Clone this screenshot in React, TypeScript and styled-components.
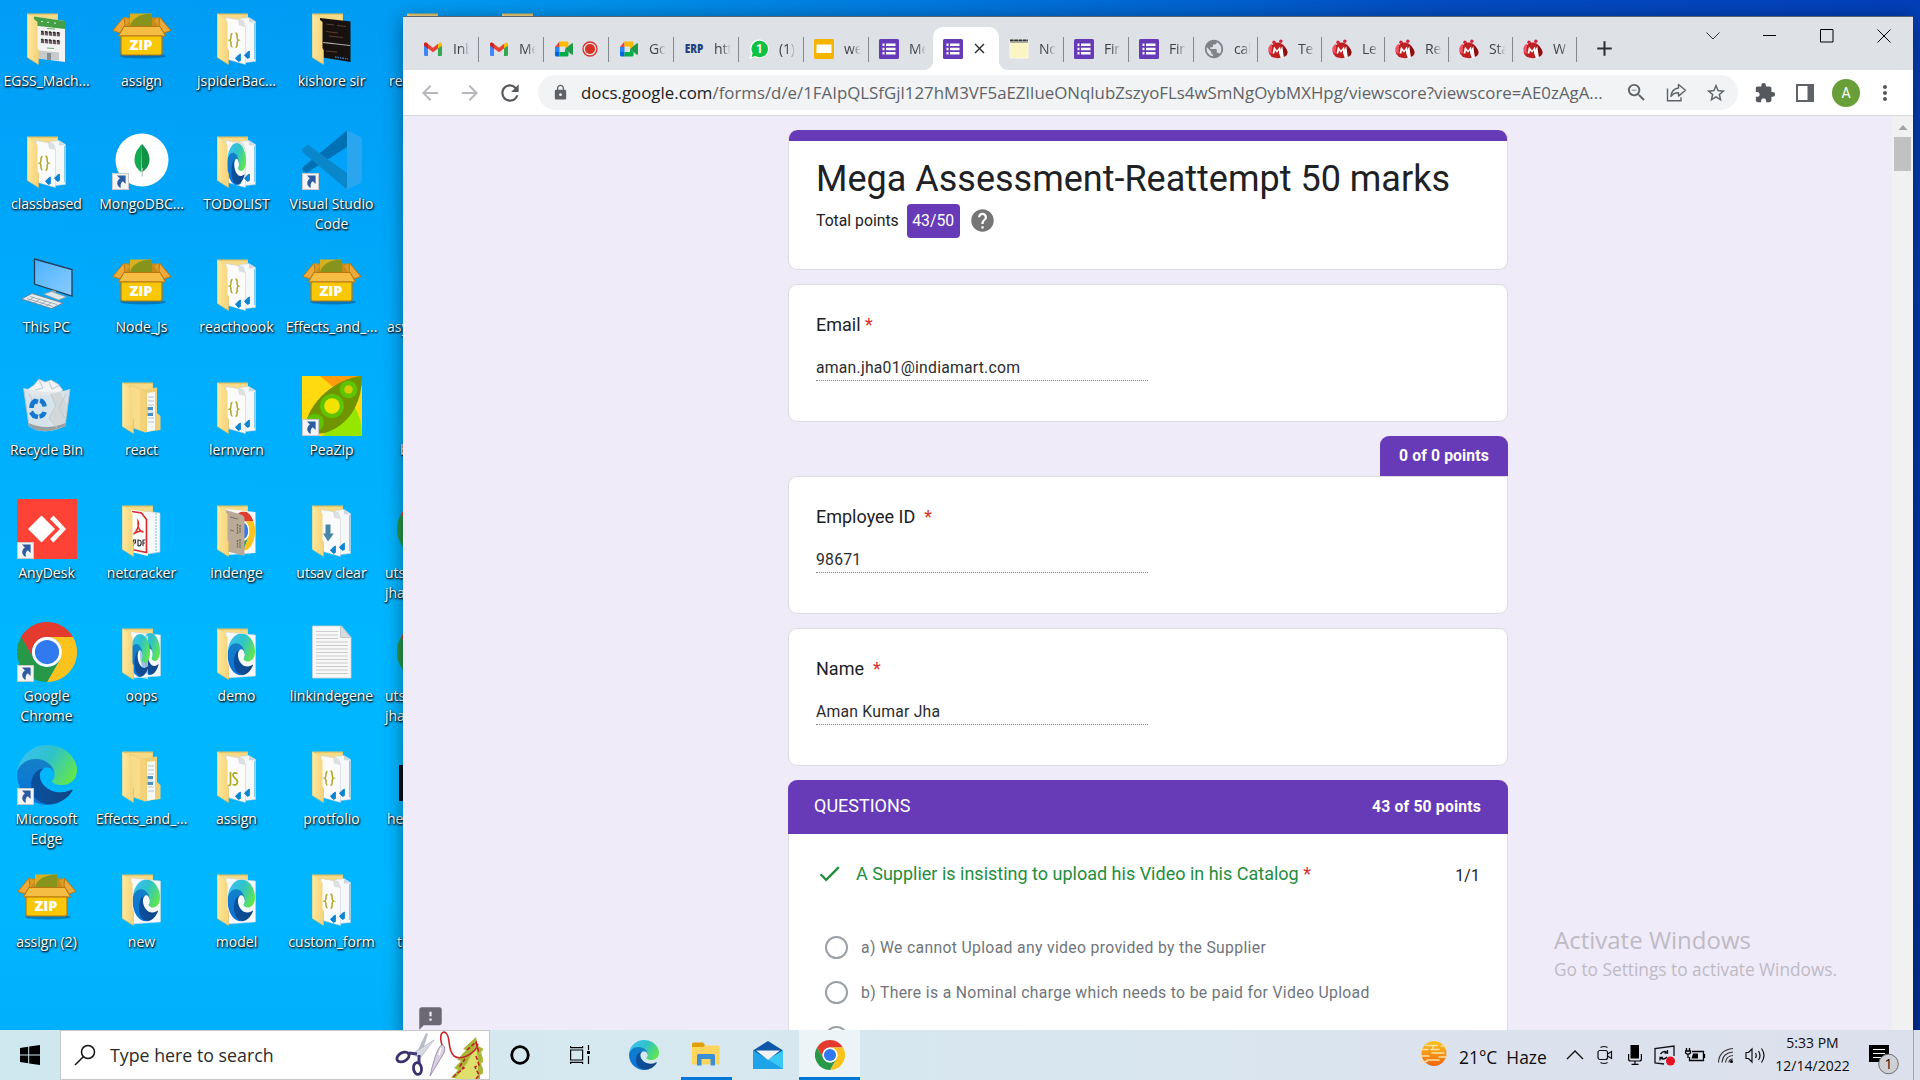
import React from "react";
import styled, { createGlobalStyle, css } from "styled-components";
import {
  MdArrowBack,
  MdArrowForward,
  MdRefresh,
  MdLock,
  MdExtension,
  MdStarBorder,
  MdMoreVert,
  MdAdd,
  MdClose,
  MdHelp,
  MdFeedback,
  MdCheck,
  MdPublic,
  MdZoomOut,
} from "react-icons/md";

const ui = `"Open Sans", "Noto Sans", sans-serif`;
const roboto = `Roboto, "Liberation Sans", sans-serif`;
const purple = "#673ab7";

const Global = createGlobalStyle`
  * { box-sizing: border-box; }
  html, body { margin: 0; padding: 0; overflow: hidden; }
  svg { display: block; flex: none; }
`;

/* ---------- desktop ---------- */

const Screen = styled.div`
  width: 1920px;
  height: 1080px;
  display: flex;
  flex-direction: column;
  overflow: hidden;
  font-family: ${ui};
`;

const Desktop = styled.div`
  position: relative;
  height: 1030px;
  overflow: hidden;
  background:
    linear-gradient(180deg, rgba(0, 183, 255, 0) 0, rgba(0, 177, 255, 0.8) 360px, #00b6ff 640px, #00b7ff 900px, #00b0fa 1030px) 0 0 / 403px 100% no-repeat,
    linear-gradient(180deg, rgba(0, 46, 150, 0), #00309a) 100% 0 / 8px 100% no-repeat,
    linear-gradient(90deg, #009df6 0, #009bf3 430px, #008de8 660px, #0078de 940px, #0160d0 1230px, #034cc2 1440px, #033fb8 1920px);
`;

const IconGrid = styled.div`
  display: grid;
  grid-auto-flow: column;
  grid-template-rows: repeat(8, 123px);
  grid-auto-columns: 95px;
  width: 600px;
  margin-left: -1px;
`;

const Cell = styled.div<{ $shift?: number }>`
  display: flex;
  flex-direction: column;
  align-items: center;
  padding-top: 7px;
  ${(p) =>
    p.$shift !== undefined &&
    css`
      align-items: flex-start;
      > svg { margin-left: 18px; }
      > span { margin-left: ${p.$shift}px; text-align: left; }
    `}
`;

const Label = styled.span`
  margin-top: 4px;
  font-size: 14px;
  line-height: 20px;
  color: #fff;
  text-align: center;
  white-space: pre;
  text-shadow: 1px 1px 2px #000, 0 1px 2px rgba(0, 0, 0, 0.75);
`;

type MarkProps = { x?: number; y?: number; size?: number; w?: number };

const EdgeMark = ({ x = 0, y = 0, size = 60, w = size }: MarkProps) => (
  <svg x={x} y={y} width={w} height={size} viewBox="0 0 256 256" preserveAspectRatio="none">
    <defs>
      <linearGradient id="edgeDark" x1="0.1" x2="0.95" y1="0.6" y2="0.6">
        <stop offset="0" stopColor="#0a4f9c" />
        <stop offset="1" stopColor="#124685" />
      </linearGradient>
      <linearGradient id="edgeBlue" x1="0.6" x2="0.4" y1="0.1" y2="1">
        <stop offset="0" stopColor="#1380c8" />
        <stop offset="1" stopColor="#0a73da" />
      </linearGradient>
      <linearGradient id="edgeTop" x1="0" x2="1" y1="0.2" y2="0.65">
        <stop offset="0" stopColor="#3cc0f6" />
        <stop offset="0.5" stopColor="#2fc3c8" />
        <stop offset="1" stopColor="#62e64e" />
      </linearGradient>
    </defs>
    <path fill="url(#edgeBlue)" d="M105.73 241.42a79.2 79.2 0 0 1-22.74-21.34 80.72 80.72 0 0 1 29.49-120c3.12-1.47 8.46-4.13 15.56-4a32.35 32.35 0 0 1 25.69 13 31.88 31.88 0 0 1 6.36 18.66c0-.21 24.46-79.6-80-79.6-43.9 0-80 41.65-80 78.21a130.15 130.15 0 0 0 12.11 56 128 128 0 0 0 156.38 67.11 75.55 75.55 0 0 1-62.78-8z" />
    <path fill="url(#edgeDark)" d="M231.05 190.54c-3.38 1.77-6.87 3.35-10.44 4.72a101.16 101.16 0 0 1-35.6 6.45c-46.91 0-87.78-32.27-87.78-73.68a31.21 31.21 0 0 1 16.27-27.23c-42.43 1.78-53.35 46-53.35 71.91 0 73.26 67.52 80.68 82.06 80.68 7.85 0 19.67-2.28 26.77-4.52l1.3-.44a128.34 128.34 0 0 0 66.6-52.8 4 4 0 0 0-5.83-5.09z" />
    <path fill="url(#edgeTop)" d="M152.33 148.86c-.81 1-3.3 2.5-3.3 5.66 0 2.61 1.7 5.12 4.72 7.23 14.38 10 41.49 8.68 41.56 8.68a59.56 59.56 0 0 0 30.27-8.35A61.38 61.38 0 0 0 256 109.18c.26-22.41-8-37.31-11.34-43.91C223.46 23.82 177.72 0 128 0A128 128 0 0 0 0 126.2c.48-36.54 36.8-66.05 80-66.05 3.5 0 23.46.34 42 10.07 16.34 8.58 24.9 18.94 30.85 29.21 6.18 10.67 7.28 24.15 7.28 29.52s-2.74 13.33-7.8 19.91z" />
  </svg>
);

const ChromeMark = ({ x = 0, y = 0, size = 60, w = size }: MarkProps) => (
  <svg x={x} y={y} width={w} height={size} viewBox="0 0 48 48" preserveAspectRatio="none">
    <path fill="#e33b2e" d="M24 12h20.785A24 24 0 0 0 3.215 12l10.393 18A12 12 0 0 1 24 12z" />
    <path fill="#fcc31e" d="M34.392 30 24 48a24 24 0 0 0 20.785-36H24a12 12 0 0 1 10.392 18z" />
    <path fill="#279847" d="M13.608 30 3.215 12A24 24 0 0 0 24 48l10.392-18a12 12 0 0 1-20.784 0z" />
    <circle cx="24" cy="24" r="12" fill="#fff" />
    <circle cx="24" cy="24" r="9.7" fill="#3079ee" />
  </svg>
);

const Shortcut = () => (
  <g>
    <rect x="0.5" y="43.5" width="16" height="16" fill="#f4f4f4" stroke="#c9c9c9" />
    <path d="M5 45.5h8.6v8.6l-2.8-2.8c-2.2 1.6-2.6 3.9-1.9 6.5-4.6-1.6-4.7-7.1-1-9.4z" fill="#2d5ba3" />
  </g>
);

type FolderKind = "code" | "green" | "dark" | "edgecode" | "edge" | "edge2" | "nested" | "pdf" | "chrome" | "down" | "js" | "plain";

const VsDot = ({ x, y }: { x: number; y: number }) => (
  <path d={`M${x + 5} ${y}v6.5l-2 1-3-3 3-3.4zM${x} ${y + 3.2}l3.4 2.4`} fill="#0a84d0" stroke="#0a84d0" strokeWidth="0.8" />
);

const Folder = ({ kind }: { kind: FolderKind }) => (
  <svg width="60" height="60" viewBox="0 0 60 60">
    <defs>
      <linearGradient id="flap" x1="0" x2="1" y1="0" y2="0.2">
        <stop offset="0" stopColor="#ffe99f" />
        <stop offset="1" stopColor="#f6d57d" />
      </linearGradient>
    </defs>
    <path d="M10.5 6.5H41V50H10.5z" fill="#e7c468" />
    <path d="M11.5 8H40.5V50H11.5z" fill="#f5da88" />
    {(kind === "code" || kind === "down" || kind === "js" || kind === "edgecode") && (
      <>
        <path d="M33 11.5l9-1 6.500 4V54.500L34 56z" fill="#f5f7f8" stroke="#c6cfd4" strokeWidth="0.5" />
        <path d="M42 10.5v4.8h6z" fill="#cdd8de" />
        <path d="M47.5 16v36" stroke="#6cc3e8" strokeWidth="0.8" />
        <path d="M19 10.5l17 3 2.5 6.5V57.5L19 52z" fill="#fbfbfb" stroke="#c4c8ca" strokeWidth="0.5" />
        <path d="M31 12.5l5.5 1.3 2 6.2-6.5-1.5z" fill="#dadfe2" />
        {kind === "code" && (
          <path d="M25.5 26.5c-2 0-1.4 3-1.6 4.7-.1 1.5-1.4 2-1.4 2s1.3.4 1.4 2c.2 1.8-.4 4.800 1.6 4.800M28.500 26c2.300.2 1.500 3.600 1.700 5.200.1 1.500 1.400 2 1.400 2s-1.300.4-1.400 2c-.2 1.800.6 5-1.700 5.200" fill="none" stroke="#a8a51c" strokeWidth="1.4" />
        )}
        {kind === "down" && <path d="M23.5 25.5h5v9h3.3L26 42.5l-5-8h2.5z" fill="#4587a8" />}
        {kind === "js" && <path d="M23.5 27v11q0 3-3 2.5M30.5 28.5q-4.500-1.500-4.500 1.500c0 3.500 4.500 3 4.500 7q-.5 4-5 2.500" fill="none" stroke="#b0ad20" strokeWidth="1.8" />}
        <VsDot x={28.5} y={47} />
        <VsDot x={37.5} y={44} />
        {kind === "edgecode" && <EdgeMark x={20} y={13} size={42} w={19} />}
      </>
    )}
    {kind === "green" && (
      <>
        <path d="M17 9.5l31 4.500v41L17 51z" fill="#f3f3f3" />
        <path d="M17 9.5l31 4.500v8L17 18.500z" fill="#43a047" />
        <path d="M24 14.5h2m4 .8h2m5 .8h2" stroke="#d8f0d8" strokeWidth="1" />
        <path d="M24 26l19 1.500M24 34l19 1.500" stroke="#6a5a5e" strokeWidth="4" strokeDasharray="3.2 .8" />
        <path d="M24 24.500l19 1.500M24 32.500l19 1.500" stroke="#2f2b2e" strokeWidth="1.6" strokeDasharray="2 2" />
        <path d="M30 21.500l8 .5M30 41l7 .5" stroke="#64b368" strokeWidth="1" />
        <path d="M22 43.5l20 2v8l-20-2z" fill="#c6cacc" />
        <path d="M30 46h4v7h-4z" fill="#858c90" />
      </>
    )}
    {kind === "dark" && (
      <>
        <path d="M18 11l30.500 3.500V55L18 50z" fill="#17120f" />
        <path d="M24 17l8 1m3 .5l9 1m-20 5l12 1.500m-9 3l14 1.500m-17 5l8 1M24 44l11 1" stroke="#63432c" strokeWidth="0.9" />
        <path d="M21 35.5l27 3" stroke="#d9d9d9" strokeWidth="0.8" />
        <path d="M33 50l13 2" stroke="#3a78b8" strokeWidth="1.6" strokeDasharray="1.5 1" />
      </>
    )}
    {(kind === "edge" || kind === "edge2") && (
      <>
        <path d="M19 10l29.500 3v41L20 56z" fill="#f7f8f9" stroke="#cfd4d6" strokeWidth="0.5" />
        {kind === "edge" ? (
          <EdgeMark x={20.5} y={11.500} size={42} w={27.500} />
        ) : (
          <>
            <EdgeMark x={28} y={11} size={42} w={20} />
            <path d="M20 10l16 4v43.500L20 53z" fill="#fafafa" fillOpacity="0.6" />
            <EdgeMark x={18} y={12} size={43} w={20} />
          </>
        )}
      </>
    )}
    {kind === "nested" && (
      <>
        <path d="M27 14l18-2.500V37l3.500 3V54L34 56z" fill="#efce74" />
        <path d="M35 17l8-1v38l-8 2z" fill="#f6f8fa" />
        <path d="M36 21h6m-6 4h6m-6 4h6m-6 8h6m-6 5h6m-6 4h6" stroke="#a6b6c4" strokeWidth="0.8" />
        <path d="M35.5 31h5.500v9h-5.500z" fill="#4a90c4" />
        <path d="M35.5 34h5.500v3h-5.500z" fill="#d8e8f4" />
        <path d="M18 9l16 6.500V56.500L18 51z" fill="#f8dc8c" stroke="#e6c263" strokeWidth="0.5" />
        <path d="M28 14l6 2v40l-6-2z" fill="#f3d27a" />
      </>
    )}
    {kind === "pdf" && (
      <>
        <path d="M33 12l15 2V53L36 55z" fill="#f6f8f9" stroke="#c3cbd0" strokeWidth="0.6" />
        <path d="M44 14v38" stroke="#6cc3ea" strokeDasharray="2 1" />
        <path d="M19 10.5l17 3V57L19 53z" fill="#fff" />
        <path d="M20 12.5l9.500 1.500 5 6.500v33L20 50.500" fill="none" stroke="#dc2b2b" strokeWidth="1.7" />
        <path d="M26 22c2 4-2 12-4.500 13 4-3 7-3.500 10-2-4-.5-6-5-5.500-11z" fill="none" stroke="#e02f2f" strokeWidth="1.5" />
        <path d="M21.5 47v-6h2v3h-2m4.500 3v-6q4 0 3 4 0 2-3 2m5 0v-6h2.500m-2.500 3h2" fill="none" stroke="#333" strokeWidth="1.2" />
      </>
    )}
    {kind === "chrome" && (
      <>
        <path d="M19 10l29.500 3v41L20 56z" fill="#f7f8f9" />
        <ChromeMark x={25} y={12.500} size={39} w={23} />
        <path d="M19 11l15 4.500q3.500 1.500 3.500 4V57L19 52z" fill="#b9ab97" />
        <path d="M23 18l8 2m-8 11l4 1" stroke="#685e50" strokeWidth="0.8" />
        <path d="M30.5 25v10m2.500-9v8M30.500 41v8m2.500-9v9" stroke="#776c5f" strokeWidth="1.4" strokeDasharray="2 .7" />
      </>
    )}
    <path d="M10.3 6.500L20.500 15V41l1 2V57.500L10.300 50.500z" fill="url(#flap)" />
    <path d="M10.3 50.500L21.500 57.500V43" fill="none" stroke="#dfbb5c" strokeWidth="0.6" />
  </svg>
);

const ZipText = styled.text`
  font: 800 14px "Open Sans", sans-serif;
  fill: #fff;
`;

const ZipBox = () => (
  <svg width="60" height="60" viewBox="0 0 60 60">
    <ellipse cx="31" cy="49" rx="23" ry="2.5" fill="rgba(0,60,110,.45)" />
    <path d="M12 10.5h36V21H12z" fill="#c98a1a" />
    <path d="M18 6.5h22v14H18z" fill="#d8b01e" />
    <path d="M18 19C20 11 28 7 40 6.500V20H18z" fill="#86941c" />
    <path d="M12 10L8 19h6l4-6zM48 10l4 9h-6l-4-6z" fill="#dc9c28" />
    <path d="M12 10L0.8 23.500 8 26l5-8zM47.500 10L58.800 23.500 52 26l-5-8z" fill="#eda93a" stroke="#b97710" strokeWidth="1" />
    <path d="M12 19.5h36l5.500 9.500H6.500z" fill="#f6bd45" stroke="#b97710" strokeWidth="1" />
    <path d="M9 29h41v17q0 2-2 2H11q-2 0-2-2z" fill="#f8c806" stroke="#b97710" strokeWidth="1.2" />
    <ZipText x="17.4" y="43.400" textLength="23" lengthAdjust="spacingAndGlyphs">ZIP</ZipText>
  </svg>
);

const Mongo = () => (
  <svg width="60" height="60" viewBox="0 0 60 60">
    <circle cx="30" cy="30" r="26.5" fill="#fff" />
    <path d="M30 14c-4.500 5-7.500 9-7.500 16 0 6 3.500 9.500 7 12.500z" fill="#13aa52" />
    <path d="M30 14c4.500 5 7.500 9 7.500 16 0 6-4 9.500-7.500 12.500z" fill="#129149" />
    <path d="M30.2 38v8.500" stroke="#b8c4c2" strokeWidth="1.2" />
    <Shortcut />
  </svg>
);

const VsCode = () => (
  <svg width="60" height="60" viewBox="0 0 60 60">
    <path d="M45 0.5V17L4.500 43 .8 40.500q-1.300-1.800 0-3.200z" fill="#0070b4" />
    <path d="M45 59.5V43L5.500 14.500.8 19q-1.300 1.500 0 3.200z" fill="#0a86cb" />
    <path d="M45 .5l13 6q2 1 2 3.300V50q0 2.500-2 3.400l-13 6q-2 .6-3.500-1c2 1.500 3.500.3 3.500-1.400z" fill="#2aa5f0" />
    <Shortcut />
  </svg>
);

const ThisPc = () => (
  <svg width="60" height="60" viewBox="0 0 60 60">
    <defs>
      <linearGradient id="pc" x1="0" x2="1" y1="0" y2="1">
        <stop offset="0" stopColor="#4db2ff" />
        <stop offset="1" stopColor="#8acdff" />
      </linearGradient>
    </defs>
    <path d="M17.5 6L55 16.500V43L17.500 31z" fill="url(#pc)" stroke="#23405a" strokeWidth="1.3" />
    <path d="M35 37l4 1v4h-4z" fill="#9aa7b0" />
    <path d="M26.5 41l8-2.500 15 5.500-8 3z" fill="#dfe6ea" stroke="#8b98a1" strokeWidth="0.7" />
    <path d="M4.5 46L15 40.500 46 50 34.500 55.500z" fill="#e4eaee" stroke="#6f7c86" strokeWidth="0.8" />
    <path d="M10 45.5l26 8M13 43.500l27 8M11 48l6-4m0 6l6-4m0 6l6-4m-1 6l6-4" stroke="#8b98a1" strokeWidth="0.7" />
  </svg>
);

const RecycleBin = () => (
  <svg width="60" height="60" viewBox="0 0 60 60">
    <path d="M10 14l7-5 5-6 6 3 6-2 7 4 5 6-6 5H15z" fill="#f1f3f4" stroke="#b7bfc4" strokeWidth="0.7" />
    <path d="M22 4l4 8-8 2m14-8l3 7 8-4" fill="none" stroke="#b9c1c6" strokeWidth="0.9" />
    <path d="M6.5 12l5.500 38q14 10 36 0l5-37q-20 7-46.500-1z" fill="#e3e7e9" fillOpacity="0.94" />
    <path d="M33 18l6 12-7 12 8 10 7-4 3-20-7-12z" fill="#d2d7da" />
    <path d="M6.5 12l5.500 38q14 10 36 0l5-37" fill="none" stroke="#b4c2cb" strokeWidth="1" />
    <path d="M12 50q14 10 36 0l.5-3q-19 8-37 0z" fill="#979fa3" />
    <path d="M34 18l5 12-7 12 8 10m9-34l-7 14 6 10M12 18l4 8" stroke="#c2c9cd" strokeWidth="1" fill="none" />
    <g fill="none" stroke="#1478d0" strokeWidth="4.600">
      <path d="M14.5 32q0-5 3.500-7l3 1" />
      <path d="M23 24.500q4 1 4.500 6" />
      <path d="M27.5 36q-1 4-5 4.500M14 36l3 4 4 1" />
    </g>
  </svg>
);

const PeaZip = () => (
  <svg width="60" height="60" viewBox="0 0 60 60">
    <path d="M0 0h60v60H0z" fill="#ffda10" />
    <path d="M18 0h42v10L30 10z" fill="#ff9c0c" />
    <path d="M52 30q8 12 8 30H20z" fill="#96e600" />
    <path d="M60 0C35 2 6 25 3 52q9 7 20 5C45 50 60 30 60 0z" fill="#6f9400" />
    <circle cx="46.5" cy="13.5" r="8.8" fill="#5fc400" />
    <circle cx="46.5" cy="13.5" r="4.3" fill="#d6cc00" />
    <circle cx="30" cy="30" r="12" fill="#5fc400" />
    <circle cx="30" cy="30" r="7.8" fill="#f2e400" />
    <circle cx="13" cy="46.5" r="8.8" fill="#5fc400" />
    <Shortcut />
  </svg>
);

const AnyDesk = () => (
  <svg width="60" height="60" viewBox="0 0 60 60">
    <path d="M0 0h60v60H0z" fill="#fe4236" />
    <path d="M24.5 16.500L38 30 24.500 43.500 11 30z" fill="#fff" />
    <path d="M33 20l3.500-3.500L49 30 36.500 43.500 33 40l10-10z" fill="#fff" />
    <Shortcut />
  </svg>
);

const TextFile = () => (
  <svg width="60" height="60" viewBox="0 0 60 60">
    <path d="M10.5 4h29L49 15.500V56H10.500z" fill="#f8f8f8" stroke="#cfcfcf" strokeWidth="0.8" />
    <path d="M38.5 4v11.500H49z" fill="#d9dcde" stroke="#b9bec1" strokeWidth="0.8" />
    <path d="M14 9.5h22M14 13h22M14 16.500h22M14 20h32M14 23.500h32M14 27h32M14 30.500h32M14 34h32M14 37.500h32M14 41h32M14 44.500h32M14 48h32M14 51.500h32" stroke="#cbcbcb" strokeWidth="1" />
  </svg>
);

const ChromeShortcut = () => (
  <svg width="60" height="60" viewBox="0 0 60 60">
    <ChromeMark />
    <Shortcut />
  </svg>
);
const EdgeShortcut = () => (
  <svg width="60" height="60" viewBox="0 0 60 60">
    <EdgeMark />
    <Shortcut />
  </svg>
);
const Blank = () => <svg width="60" height="60" />;
const DarkTile = () => (
  <svg width="60" height="60" viewBox="0 0 60 60">
    <path d="M2 20h58v36H2z" fill="#05131c" />
  </svg>
);

type Item = { icon: React.ReactNode; label: string; shift?: number };
const f = (kind: FolderKind, label: string): Item => ({ icon: <Folder kind={kind} />, label });

const items: Item[] = [
  f("green", "EGSS_Mach..."),
  f("code", "classbased"),
  { icon: <ThisPc />, label: "This PC" },
  { icon: <RecycleBin />, label: "Recycle Bin" },
  { icon: <AnyDesk />, label: "AnyDesk" },
  { icon: <ChromeShortcut />, label: "Google\nChrome" },
  { icon: <EdgeShortcut />, label: "Microsoft\nEdge" },
  { icon: <ZipBox />, label: "assign (2)" },

  { icon: <ZipBox />, label: "assign" },
  { icon: <Mongo />, label: "MongoDBC..." },
  { icon: <ZipBox />, label: "Node_Js" },
  f("nested", "react"),
  f("pdf", "netcracker"),
  f("edge2", "oops"),
  f("nested", "Effects_and_..."),
  f("edge", "new"),

  f("code", "jspiderBac..."),
  f("edgecode", "TODOLIST"),
  f("code", "reacthoook"),
  f("code", "lernvern"),
  f("chrome", "indenge"),
  f("edge", "demo"),
  f("js", "assign"),
  f("edge", "model"),

  f("dark", "kishore sir"),
  { icon: <VsCode />, label: "Visual Studio\nCode" },
  { icon: <ZipBox />, label: "Effects_and_..." },
  { icon: <PeaZip />, label: "PeaZip" },
  f("down", "utsav clear"),
  { icon: <TextFile />, label: "linkindegene" },
  f("code", "protfolio"),
  f("code", "custom_form"),

  { icon: <Folder kind="plain" />, label: "re", shift: 10 },
  { icon: <Blank />, label: "", shift: 0 },
  { icon: <Blank />, label: "asy", shift: 8 },
  { icon: <Blank />, label: "b", shift: 21 },
  { icon: <ChromeMark />, label: "uts\njha", shift: 6 },
  { icon: <ChromeMark />, label: "uts\njha", shift: 6 },
  { icon: <DarkTile />, label: "he", shift: 8 },
  { icon: <Blank />, label: "t", shift: 18 },

  { icon: <Folder kind="plain" />, label: "", shift: 0 },
];

/* ---------- browser ---------- */

const Window = styled.div`
  position: absolute;
  left: 403px;
  top: 16px;
  width: 1510px;
  height: 1030px;
  display: flex;
  flex-direction: column;
  border-top: 1px solid #5d6670;
  background: #fff;
  box-shadow: 0 3px 18px rgba(0, 0, 0, 0.42);
`;

const TabStrip = styled.div`
  display: flex;
  align-items: flex-end;
  height: 53px;
  padding-left: 10px;
  background: #dee1e6;
`;

const Tab = styled.div<{ $w: number; $sep?: boolean }>`
  display: flex;
  align-items: center;
  width: ${(p) => p.$w}px;
  height: 43px;
  padding-left: 10px;
  background: ${(p) =>
    p.$sep ? "linear-gradient(#85898e, #85898e) right 10px / 1.5px 25px no-repeat" : "none"};
`;

const ActiveTab = styled(Tab)`
  position: relative;
  border-radius: 10px 10px 0 0;
  background: #fff;
  gap: 8px;
  color: #2c2f33;
  &::before,
  &::after {
    content: "";
    position: absolute;
    bottom: 0;
    width: 10px;
    height: 10px;
  }
  &::before {
    left: -10px;
    background: radial-gradient(circle at 0 0, transparent 10px, #fff 10.5px);
  }
  &::after {
    right: -10px;
    background: radial-gradient(circle at 100% 0, transparent 10px, #fff 10.5px);
  }
`;

const TabTitle = styled.span`
  width: 17px;
  margin-left: 10px;
  overflow: hidden;
  white-space: nowrap;
  font-size: 14px;
  line-height: 20px;
  letter-spacing: -0.2px;
  color: #3f4246;
  mask-image: linear-gradient(90deg, #000 45%, transparent 98%);
`;

const TabRec = styled.div`
  margin-left: 8px;
`;

const NewTab = styled.div`
  display: flex;
  align-items: center;
  height: 43px;
  margin-left: 15px;
  color: #2e3135;
`;

const WindowButtons = styled.div`
  display: flex;
  align-self: flex-start;
  margin-left: auto;
  padding-right: 1px;
`;

const WinButton = styled.div`
  display: flex;
  justify-content: center;
  width: 57px;
  padding-top: 12px;
`;

const Toolbar = styled.div`
  display: flex;
  align-items: center;
  height: 46px;
  padding: 0 4px 0 13px;
  border-bottom: 1px solid #d5d7db;
  color: #5f6368;
`;

const NavIcon = styled.div<{ $dim?: boolean; $w: number }>`
  display: flex;
  flex: none;
  justify-content: center;
  width: ${(p) => p.$w}px;
  color: ${(p) => (p.$dim ? "#b5b7ba" : "#55595e")};
`;

const Omnibox = styled.div`
  display: flex;
  flex: none;
  align-items: center;
  width: 1200px;
  height: 35px;
  padding: 0 2px 0 14px;
  margin-left: 14px;
  border-radius: 18px;
  background: #f1f3f4;
`;

const Url = styled.div`
  flex: none;
  width: 1036px;
  margin-left: 12px;
  font-size: 16.85px;
  line-height: 24px;
  white-space: nowrap;
  color: #5f6368;
  b { font-weight: 400; color: #202124; }
`;

const OmniIcon = styled.div`
  display: flex;
  justify-content: center;
  width: 40px;
`;

const Avatar = styled.div`
  display: flex;
  flex: none;
  align-items: center;
  justify-content: center;
  width: 28px;
  height: 28px;
  margin: 0 5px;
  border-radius: 50%;
  background: #689f38;
  color: #fff;
  font: 400 14px ${roboto};
`;

const Viewport = styled.div`
  display: flex;
  flex: 1;
  min-height: 0;
  background: #efebf8;
`;

const PageArea = styled.div`
  position: relative;
  width: 1489px;
  height: 914px;
  overflow: hidden;
  padding: 14px 0 0 385px;
  font-family: ${roboto};
  color: #202124;
`;

const Scrollbar = styled.div`
  display: flex;
  flex-direction: column;
  align-items: center;
  width: 21px;
  background: #f1f1f1;
`;

const ScrollThumb = styled.div`
  width: 17px;
  height: 34px;
  margin-top: 7px;
  background: #c1c1c1;
`;

/* ---------- form ---------- */

const Card = styled.section<{ $h: number; $notch?: boolean }>`
  width: 720px;
  height: ${(p) => p.$h}px;
  margin-bottom: 14px;
  padding: 26px 27px 0;
  border: 1px solid #dadce0;
  border-radius: ${(p) => (p.$notch ? "9px 0 9px 9px" : "9px")};
  background: #fff;
`;

const HeaderCard = styled(Card)`
  padding-top: 27px;
  border-top: 0;
  background: linear-gradient(${purple}, ${purple}) 0 0 / 100% 11px no-repeat border-box, #fff;
`;

const Title = styled.h1`
  margin: 0 0 2px;
  font-size: 36px;
  font-weight: 400;
  line-height: 45px;
  white-space: nowrap;
`;

const ScoreRow = styled.div`
  display: flex;
  align-items: center;
  height: 34px;
  font-size: 15.75px;
  > svg { margin-bottom: 1px; }
`;

const ScoreLabel = styled.span`
  padding-bottom: 2px;
`;

const ScoreBadge = styled.span`
  display: flex;
  align-items: center;
  justify-content: center;
  width: 53px;
  height: 34px;
  margin: 0 9px 0 8px;
  padding-bottom: 2px;
  border-radius: 4px;
  background: ${purple};
  color: #fff;
`;

const FieldName = styled.div`
  font-size: 18px;
  line-height: 27px;
  white-space: pre;
`;

const Star = styled.span`
  color: #d93025;
`;

const FieldValue = styled.div`
  width: 332px;
  height: 24px;
  margin-top: 19px;
  border-bottom: 1px dotted #8b8b8b;
  font-size: 15.75px;
  line-height: 22px;
  letter-spacing: 0.22px;
  color: #2b2c2e;
`;

const PointsTab = styled.div`
  width: 128px;
  height: 40px;
  margin-left: 592px;
  border-radius: 9px 9px 0 0;
  background: ${purple};
  color: #fff;
  font-size: 15.75px;
  font-weight: 700;
  line-height: 39px;
  letter-spacing: 0.1px;
  text-align: center;
`;

const SectionHead = styled.div`
  display: flex;
  align-items: center;
  justify-content: space-between;
  width: 720px;
  height: 54px;
  padding: 0 27px 4px 26px;
  border-radius: 9px 9px 0 0;
  background: ${purple};
  color: #fff;
  font-size: 18px;
  b { font-size: 15.75px; font-weight: 700; letter-spacing: 0.16px; padding-top: 3px; }
`;

const QuestionBody = styled.div`
  width: 720px;
  height: 300px;
  padding: 26px 27px 0;
  border: solid #dadce0;
  border-width: 0 1px;
  background: #fff;
`;

const QuestionRow = styled.div`
  display: flex;
  align-items: center;
  height: 27px;
  margin-bottom: 38px;
  font-size: 18px;
  color: #1e8e3e;
`;

const QuestionText = styled.span`
  flex: 1;
  margin-left: 13px;
`;

const Points = styled.span`
  padding-top: 3px;
  font-size: 15.75px;
  letter-spacing: 0.22px;
  color: #202124;
`;

const Option = styled.div`
  display: flex;
  align-items: center;
  height: 45px;
  padding-left: 8.5px;
  font-size: 15.75px;
  letter-spacing: 0.33px;
  color: #70757a;
`;

const Radio = styled.span`
  width: 23px;
  height: 23px;
  margin-right: 13.5px;
  border: 2.25px solid #9aa0a6;
  border-radius: 50%;
`;

const Feedback = styled.div`
  position: absolute;
  left: 14px;
  bottom: -2px;
  color: #6c6975;
`;

const Watermark = styled.div`
  position: absolute;
  left: 1554px;
  top: 922px;
  color: #bebac5;
  white-space: nowrap;
`;
const WatermarkTitle = styled.div`
  font-size: 24px;
  line-height: 36px;
`;
const WatermarkText = styled.div`
  font-size: 17.3px;
  line-height: 23px;
`;

/* ---------- tab icons ---------- */

const Gmail = () => (
  <svg width="20" height="20" viewBox="0 0 20 20">
    <path d="M1 6l4 3v8H2.200Q1 17 1 15.700z" fill="#4285f4" />
    <path d="M15 9l4-3v9.700q0 1.300-1.200 1.300H15z" fill="#34a853" />
    <path d="M15 5l1.600-1.200Q19 3 19 5.500V6.500L15 9.500z" fill="#fbbc04" />
    <path d="M1 6.500v-1Q1 3 3.400 3.800L10 8.700l5-3.900v4.700l-5 3.800-5-3.800z" fill="#ea4335" />
    <path d="M1 6.500v-1Q1 3 3.400 3.800L5 5v4.500z" fill="#c5221f" />
  </svg>
);
const Meet = () => (
  <svg width="20" height="20" viewBox="0 0 20 20">
    <path d="M1 8h4.500v5H1z" fill="#2684fc" />
    <path d="M5.500 2.500V8H1z" fill="#ea4335" />
    <path d="M5.500 2.500H13q1.500 0 1.500 1.500v3L11 10V7.500H5.500z" fill="#ffba00" />
    <path d="M1 13h4.500v4.500H2.500Q1 17.500 1 16z" fill="#0066da" />
    <path d="M5.500 13H11v-3l3.500 3v3q0 1.500-1.500 1.500H5.500z" fill="#00ac47" />
    <path d="M11 10l6.500-5.600q1.500-.6 1.500.8v9.600q0 1.400-1.500.8z" fill="#1e9a48" />
  </svg>
);
const Rec = () => (
  <svg width="16" height="16" viewBox="0 0 16 16">
    <circle cx="8" cy="8" r="7" fill="none" stroke="#d93025" strokeWidth="1.3" />
    <circle cx="8" cy="8" r="5" fill="#d93025" />
  </svg>
);
const ErpText = styled.text`
  font: 800 11.5px "Open Sans", sans-serif;
  fill: #23407e;
`;
const Erp = () => (
  <svg width="20" height="20" viewBox="0 0 20 20">
    <ErpText x="0.8" y="14.2" textLength="18.5" lengthAdjust="spacingAndGlyphs">ERP</ErpText>
  </svg>
);
const BadgeText = styled.text`
  font: 700 12px Roboto, sans-serif;
  fill: #fff;
`;
const WhatsApp = () => (
  <svg width="20" height="20" viewBox="0 0 20 20">
    <path d="M10.5.5a9.300 9.300 0 1 1-4.300 17.600L.5 19.800l1.700-5.300A9.300 9.300 0 0 1 10.500.5z" fill="#fff" />
    <path d="M10.5 1.800a8.200 8.200 0 1 1-4 15.200l-4 1.100 1.200-3.800a8.200 8.200 0 0 1 6.800-12.500z" fill="#0dc143" />
    <BadgeText x="7" y="14.3">1</BadgeText>
  </svg>
);
const Slides = () => (
  <svg width="20" height="20" viewBox="0 0 20 20">
    <rect width="20" height="20" rx="1.5" fill="#f4b400" />
    <path d="M2.5 5.500h15v8.500h-15z" fill="#fff" />
  </svg>
);
const Forms = () => (
  <svg width="20" height="20" viewBox="0 0 20 20">
    <rect width="20" height="20" rx="1.5" fill={purple} />
    <path d="M3.5 4.500h2v2.500h-2zM7 4.500h9.500v2.500H7zM3.500 8.700h2v2.500h-2zM7 8.700h9.500v2.500H7zM3.500 12.900h2v2.500h-2zM7 12.900h9.500v2.500H7z" fill="#fff" />
  </svg>
);
const Note = () => (
  <svg width="20" height="20" viewBox="0 0 20 20">
    <path d="M1 1h18v18H1z" fill="#fbf5c4" stroke="#fdfae4" />
    <path d="M1 .8h18v3H1z" fill="#9b9b98" />
    <path d="M1 1.200h18" stroke="#333" strokeWidth="1.5" strokeDasharray="3.5 .8" />
  </svg>
);
const IndiaMart = () => (
  <svg width="20" height="20" viewBox="0 0 20 20">
    <circle cx="6" cy="3.2" r="1.7" fill="#d5203a" />
    <circle cx="12.8" cy="2.200" r="1.7" fill="#d5203a" />
    <path d="M9.500 3.500q4.500 0 7.500 4.500 5 6-.5 9.500-6 3-12.500.5-5.500-4-2-9 3-5.500 7.500-5.500z" fill="#c01f22" />
    <path d="M.3 9.500q1-4 3.700-4.500L3.500 15Q0 13 .3 9.500z" fill="#ef5363" />
    <path d="M13 5.500q5 2 6.500 7.500.3 3-3 4.700z" fill="#8e0f12" />
    <path d="M4.500 14.500L6 7.500l3 4L12 7.500l1.300 7-2-.2-.6-3L9 13.800 7 11.400l-.7 3.200z" fill="#fff" />
    <path d="M11 13.500l3.300-6.500 1.500 11.500-3 .8z" fill="#fff" />
  </svg>
);

const Share = () => (
  <svg width="21" height="19" viewBox="0 0 21 19" fill="none" stroke="#5f6368" strokeWidth="1.4">
    <path d="M1.5 5.500v12.200h13.500v-3.500" />
    <path d="M12.5 1.500l7 5.800-7 5.800V9.700Q7.500 9.500 5 13.500q.5-7.500 7.500-8.500z" strokeLinejoin="round" />
  </svg>
);

/* ---------- taskbar ---------- */

const Taskbar = styled.div`
  display: flex;
  height: 50px;
  background: linear-gradient(90deg, #cfe7ef 0, #d6e8f0 600px, #d8e6ef 1100px, #dbe2ee 1500px, #dce0ed 1920px);
  color: #0c0c0c;
`;

const TaskButton = styled.div<{ $w: number; $active?: boolean; $line?: number }>`
  display: flex;
  align-items: center;
  justify-content: center;
  width: ${(p) => p.$w}px;
  background: ${(p) =>
    `linear-gradient(#0078d7, #0078d7) center bottom / ${p.$line ?? 0}px 3px no-repeat, ${p.$active ? "#ecf4f8" : "transparent"}`};
`;

const SearchBox = styled.div`
  display: flex;
  align-items: center;
  width: 430px;
  padding: 0 6px 0 13px;
  border: 1px solid #c6c8ca;
  background: #fff;
  font-size: 17.8px;
  color: #2b2b2b;
  > span { margin-left: 14px; flex: 1; }
`;

const Gap = styled.div`
  width: 3px;
`;

const Tray = styled.div`
  display: flex;
  align-items: center;
  width: 502px;
  margin-left: auto;
`;

const Weather = styled.div`
  display: flex;
  align-items: center;
  width: 142px;
  font-size: 17.4px;
  white-space: pre;
  > svg { margin-bottom: 2px; }
  > span { margin-left: 10px; padding-top: 4px; }
`;

const TrayIcon = styled.div`
  display: flex;
  justify-content: center;
  width: 30px;
`;

const Clock = styled.div`
  width: 85px;
  font-size: 14px;
  line-height: 23px;
  text-align: center;
  white-space: nowrap;
  padding-bottom: 2px;
`;

const Notify = styled.div`
  width: 59px;
  height: 50px;
  padding: 14px 0 0 14px;
  border-right: 1px solid #9aa6b0;
`;

const NotifyText = styled.text`
  font: 400 14px "Open Sans", sans-serif;
  fill: #111;
`;

const Scissors = () => (
  <svg width="88" height="48" viewBox="0 0 88 48">
    <path d="M56 47L63 39 59 37l7-7-4-1 9-10-3-1L81 6l2 9 6 3-3 3 3 10-3 1 3 10-4 2v4z" fill="#a9b637" />
    <path d="M60 48l12-16 9-18 2 15v19z" fill="#dfe06c" />
    <path d="M58 46l11-9-4-2 5-7m2-9l9-8 3 11m-3 3l3 9-4 2 4 8-3 4" fill="none" stroke="#c41f24" strokeWidth="1.6" strokeDasharray="4 2" />
    <path d="M47 14C44 4 47-1 51 2c5 4 1 17 8 23 7 5 21-2 24-12" fill="none" stroke="#c8232a" strokeWidth="1.6" />
    <path d="M48 14q3 2 1 8L35 45q5-22 9-28 1-3 4-3z" fill="#d9cfe0" stroke="#9d8cac" strokeWidth="0.9" />
    <path d="M46 17l-2 7" stroke="#fff" strokeWidth="1.6" />
    <path d="M31 2l-9 19 4 4L33 3z" fill="#b8bcc8" />
    <path d="M39 9L20 21v4l6 1z" fill="#d7dae1" stroke="#a5a9b5" strokeWidth="0.6" />
    <path d="M22 23l-8-1M24 24v9" stroke="#433a7d" strokeWidth="3" />
    <ellipse cx="8" cy="26" rx="6.5" ry="4.3" transform="rotate(-30 8 26)" fill="none" stroke="#3a3170" strokeWidth="2.8" />
    <ellipse cx="22.5" cy="37.5" rx="4" ry="6" transform="rotate(-8 22.5 37.5)" fill="none" stroke="#3a3170" strokeWidth="2.8" />
  </svg>
);

const GlobeIcon = styled(MdPublic)`
  margin: 0 -1px;
  color: #808388;
`;

type TabDef = { icon: React.ReactNode; title?: string; w: number; sep?: boolean; rec?: boolean };
const leftTabs: TabDef[] = [
  { icon: <Gmail />, title: "Inb", w: 66, sep: true },
  { icon: <Gmail />, title: "Me", w: 65, sep: true },
  { icon: <Meet />, w: 65, sep: true, rec: true },
  { icon: <Meet />, title: "Goo", w: 65, sep: true },
  { icon: <Erp />, title: "http", w: 65, sep: true },
  { icon: <WhatsApp />, title: "(1)", w: 65, sep: true },
  { icon: <Slides />, title: "wee", w: 65, sep: true },
  { icon: <Forms />, title: "Me", w: 64 },
];
const rightTabs: TabDef[] = [
  { icon: <Note />, title: "Not", w: 65, sep: true },
  { icon: <Forms />, title: "Fin", w: 65, sep: true },
  { icon: <Forms />, title: "Fin", w: 65, sep: true },
  { icon: <GlobeIcon size={22} />, title: "cal", w: 64, sep: true },
  { icon: <IndiaMart />, title: "Te", w: 64, sep: true },
  { icon: <IndiaMart />, title: "Le", w: 63, sep: true },
  { icon: <IndiaMart />, title: "Re", w: 64, sep: true },
  { icon: <IndiaMart />, title: "Sta", w: 64, sep: true },
  { icon: <IndiaMart />, title: "W", w: 64, sep: true },
];

const renderTab = (t: TabDef, i: number) => (
  <Tab key={i} $w={t.w} $sep={t.sep}>
    {t.icon}
    {t.rec ? <TabRec><Rec /></TabRec> : <TabTitle>{t.title}</TabTitle>}
  </Tab>
);

const Browser = () => (
  <Window>
    <TabStrip>
      {leftTabs.map(renderTab)}
      <ActiveTab $w={66}>
        <Forms />
        <MdClose size={17} />
      </ActiveTab>
      {rightTabs.map(renderTab)}
      <NewTab>
        <MdAdd size={25} />
      </NewTab>
      <WindowButtons>
        <WinButton>
          <svg width="14" height="14" viewBox="0 0 14 14"><path d="M.5 3.500L7 10l6.500-6.500" fill="none" stroke="#333" /></svg>
        </WinButton>
        <WinButton>
          <svg width="13" height="14" viewBox="0 0 13 14"><path d="M0 6.500h13" stroke="#000" /></svg>
        </WinButton>
        <WinButton>
          <svg width="14" height="14" viewBox="0 0 14 14"><path d="M.5.500h12.500v12.500H.5z" fill="none" stroke="#000" /></svg>
        </WinButton>
        <WinButton>
          <svg width="14" height="14" viewBox="0 0 14 14"><path d="M.5.500l13 13m0-13l-13 13" stroke="#000" /></svg>
        </WinButton>
      </WindowButtons>
    </TabStrip>
    <Toolbar>
      <NavIcon $w={28} $dim><MdArrowBack size={24} /></NavIcon>
      <NavIcon $w={52} $dim><MdArrowForward size={24} /></NavIcon>
      <NavIcon $w={28}><MdRefresh size={26} /></NavIcon>
      <Omnibox>
        <MdLock size={17} />
        <Url>
          <b>docs.google.com</b>/forms/d/e/1FAIpQLSfGjl127hM3VF5aEZlIueONqlubZszyoFLs4wSmNgOybMXHpg/viewscore?viewscore=AE0zAgA...
        </Url>
        <OmniIcon><MdZoomOut size={23} /></OmniIcon>
        <OmniIcon><Share /></OmniIcon>
        <OmniIcon><MdStarBorder size={22} /></OmniIcon>
      </Omnibox>
      <NavIcon $w={54}><MdExtension size={22} /></NavIcon>
      <NavIcon $w={26}>
        <svg width="18" height="18" viewBox="0 0 18 18"><path d="M0 0h18v18H0zM2 2v14h9.500V2z" fill="#5f6368" fillRule="evenodd" /></svg>
      </NavIcon>
      <NavIcon $w={9} />
      <Avatar>A</Avatar>
      <NavIcon $w={40}><MdMoreVert size={24} /></NavIcon>
    </Toolbar>
    <Viewport>
      <PageArea>
        <HeaderCard $h={140}>
          <Title>Mega Assessment-Reattempt 50 marks</Title>
          <ScoreRow>
            <ScoreLabel>Total points</ScoreLabel>
            <ScoreBadge>43/50</ScoreBadge>
            <MdHelp size={27} color="#757575" />
          </ScoreRow>
        </HeaderCard>
        <Card $h={138}>
          <FieldName>Email <Star>*</Star></FieldName>
          <FieldValue>aman.jha01@indiamart.com</FieldValue>
        </Card>
        <PointsTab>0 of 0 points</PointsTab>
        <Card $h={138} $notch>
          <FieldName>Employee ID  <Star>*</Star></FieldName>
          <FieldValue>98671</FieldValue>
        </Card>
        <Card $h={138}>
          <FieldName>Name  <Star>*</Star></FieldName>
          <FieldValue>Aman Kumar Jha</FieldValue>
        </Card>
        <SectionHead>
          QUESTIONS <b>43 of 50 points</b>
        </SectionHead>
        <QuestionBody>
          <QuestionRow>
            <MdCheck size={27} />
            <QuestionText>
              A Supplier is insisting to upload his Video in his Catalog <Star>*</Star>
            </QuestionText>
            <Points>1/1</Points>
          </QuestionRow>
          <Option><Radio />a) We cannot Upload any video provided by the Supplier</Option>
          <Option><Radio />b) There is a Nominal charge which needs to be paid for Video Upload</Option>
          <Option><Radio />c)</Option>
        </QuestionBody>
        <Feedback><MdFeedback size={27} /></Feedback>
      </PageArea>
      <Scrollbar>
        <svg width="10" height="14" viewBox="0 0 10 14"><path d="M.5 14L5 9l4.500 5z" fill="#a3a3a3" /></svg>
        <ScrollThumb />
      </Scrollbar>
    </Viewport>
  </Window>
);

const TaskbarView = () => (
  <Taskbar>
    <TaskButton $w={60}>
      <svg width="20" height="20" viewBox="0 0 20 20">
        <path d="M0 3l8.200-1.200V9.500H0zM9.200 1.600L20 0v9.500H9.200zM0 10.500h8.200v7.700L0 17zM9.200 10.500H20V20L9.200 18.400z" fill="#000" />
      </svg>
    </TaskButton>
    <SearchBox>
      <svg width="22" height="22" viewBox="0 0 22 22" fill="none" stroke="#111" strokeWidth="1.5">
        <circle cx="14" cy="8" r="6.5" />
        <path d="M9.3 12.700L1 21" />
      </svg>
      <span>Type here to search</span>
      <Scissors />
    </SearchBox>
    <TaskButton $w={60}>
      <svg width="20" height="20" viewBox="0 0 20 20"><circle cx="10" cy="10" r="8.3" fill="none" stroke="#000" strokeWidth="2.8" /></svg>
    </TaskButton>
    <TaskButton $w={60}>
      <svg width="20" height="20" viewBox="0 0 20 20" fill="none" stroke="#000" strokeWidth="1.2">
        <path d="M.6 5h12v10H.6zM.6 1v1.700h12V1M.6 19v-1.700h12V19M18.500 0v5M18.500 11v8" />
        <path d="M17 6h3v3h-3z" fill="#000" stroke="none" />
      </svg>
    </TaskButton>
    <Gap />
    <TaskButton $w={62}><EdgeMark size={30} /></TaskButton>
    <TaskButton $w={62} $line={51}>
      <svg width="28" height="26" viewBox="0 0 28 26">
        <path d="M0 2q0-1.500 1.500-1.500h9.500l2 2.500-1.500 3H0z" fill="#e0a00a" />
        <path d="M0 5h11l2-1.500h13q1.500 0 1.500 1.500v17.500h-27.500z" fill="#ffd560" />
        <path d="M5 13.500q0-1.500 1.500-1.500h15q1.500 0 1.500 1.500V23.500h-4.500V17H9.500v6.500H5z" fill="#3a8fd6" />
      </svg>
    </TaskButton>
    <TaskButton $w={62}>
      <svg width="30" height="28" viewBox="0 0 30 28">
        <path d="M0 9.500L15 0l15 9.500L15 20z" fill="#0d57a8" />
        <path d="M0 9.500l15 9 15-9V28H0z" fill="#1ea3e8" />
        <path d="M15 18.500l15-9V28z" fill="#3cc8f5" />
        <path d="M3 9.500h24L15 19z" fill="#f2f3f6" />
      </svg>
    </TaskButton>
    <TaskButton $w={61} $active $line={61}><ChromeMark size={30} /></TaskButton>
    <Tray>
      <Weather>
        <svg width="31" height="28" viewBox="0 0 31 28">
          <defs>
            <linearGradient id="sun" x1="0" x2="0" y1="0" y2="1">
              <stop offset="0" stopColor="#fcc419" />
              <stop offset="1" stopColor="#ee6510" />
            </linearGradient>
          </defs>
          <circle cx="16" cy="13.5" r="12.5" fill="url(#sun)" />
          <path d="M8 5.500h11M15 6v2.500M2 9.500h8M13 9.500h8M23 6h7M1 16h10M14 13h12M9 20h12M2 21.500h7M21 17h7" stroke="#fbe0a4" strokeWidth="1.6" strokeLinecap="round" />
        </svg>
        <span>21°C  Haze</span>
      </Weather>
      <TrayIcon><svg width="18" height="10" viewBox="0 0 18 10"><path d="M1 9l8-8 8 8" fill="none" stroke="#111" strokeWidth="1.4" /></svg></TrayIcon>
      <TrayIcon>
        <svg width="16" height="20" viewBox="0 0 16 20" fill="none" stroke="#111" strokeWidth="1.2">
          <path d="M3.5 2.500Q7 .5 10.500 2.500M3.500 17.500q3.500 2 7 0" />
          <rect x="1" y="5.5" width="9.5" height="9" rx="2" />
          <path d="M10.5 9l4-2.500v7l-4-2.500" />
        </svg>
      </TrayIcon>
      <TrayIcon>
        <svg width="14" height="20" viewBox="0 0 14 20">
          <path d="M2.5 0h8.500v13.500H2.500z" fill="#000" />
          <path d="M.6 9v5q0 2 2 2h8.800q2 0 2-2V9M7 16v3M3.500 19.300h7" fill="none" stroke="#000" strokeWidth="1.2" />
        </svg>
      </TrayIcon>
      <TrayIcon>
        <svg width="22" height="21" viewBox="0 0 22 21">
          <path d="M20 11V1L1 3.500V18l9 1" fill="none" stroke="#111" strokeWidth="1.3" />
          <path d="M6.5 9q3-4 6.500-1.500M13.500 5v3h-3M13 12q-3 3.500-6.500 1M6 15.500v-3h3" fill="none" stroke="#111" strokeWidth="1.3" />
          <circle cx="16.5" cy="16" r="4.5" fill="#e81123" />
        </svg>
      </TrayIcon>
      <TrayIcon>
        <svg width="21" height="15" viewBox="0 0 21 15" fill="none" stroke="#000" strokeWidth="1.3">
          <path d="M7 3.500h11.500v9H4.500V9M19.500 6v4" />
          <path d="M8 5.500h5v5H6.500z" fill="#000" stroke="none" />
          <path d="M1.5 0v3M4.500 0v3M.5 3h5v2q-2.500 2.500-5 0zM3 6v4" />
        </svg>
      </TrayIcon>
      <TrayIcon>
        <svg width="17" height="17" viewBox="0 0 17 17" fill="none" stroke="#333" strokeWidth="1.2">
          <path d="M1.5 15.500Q2 3 16 1.500M5 15.500Q5.500 6 16 5M8.500 15.500Q9 9 16 8.500" />
          <path d="M12 15.500q0-3.500 4-3.500" />
          <circle cx="14.5" cy="14.5" r="1.5" fill="#000" stroke="none" />
        </svg>
      </TrayIcon>
      <TrayIcon>
        <svg width="21" height="17" viewBox="0 0 21 17" fill="none" stroke="#111" strokeWidth="1.2">
          <path d="M1 5.500h2.500L7 2v13L3.500 11.500H1zM10.500 6q1.500 2.500 0 5M13.500 4q3 4.500 0 9M16.500 1.500q5 7 0 14" />
        </svg>
      </TrayIcon>
      <Clock>
        5:33 PM
        <br />
        12/14/2022
      </Clock>
      <Notify>
        <svg width="32" height="32" viewBox="0 0 32 32">
          <path d="M0 1h20v17h-5v4l-4-4H0z" fill="#000" />
          <path d="M4 5.500h12M4 9.500h12M4 13.500h8" stroke="#fff" strokeWidth="1.2" />
          <circle cx="19.5" cy="20" r="9.8" fill="#cfd0d4" stroke="#6c6f74" />
          <NotifyText x="15.5" y="25">1</NotifyText>
        </svg>
      </Notify>
    </Tray>
  </Taskbar>
);

export default function App() {
  return (
    <Screen>
      <Global />
      <Desktop>
        <IconGrid>
          {items.map((it, i) => (
            <Cell key={i} $shift={it.shift}>
              {it.icon}
              <Label>{it.label}</Label>
            </Cell>
          ))}
        </IconGrid>
        <Browser />
        <Watermark>
          <WatermarkTitle>Activate Windows</WatermarkTitle>
          <WatermarkText>Go to Settings to activate Windows.</WatermarkText>
        </Watermark>
      </Desktop>
      <TaskbarView />
    </Screen>
  );
}
